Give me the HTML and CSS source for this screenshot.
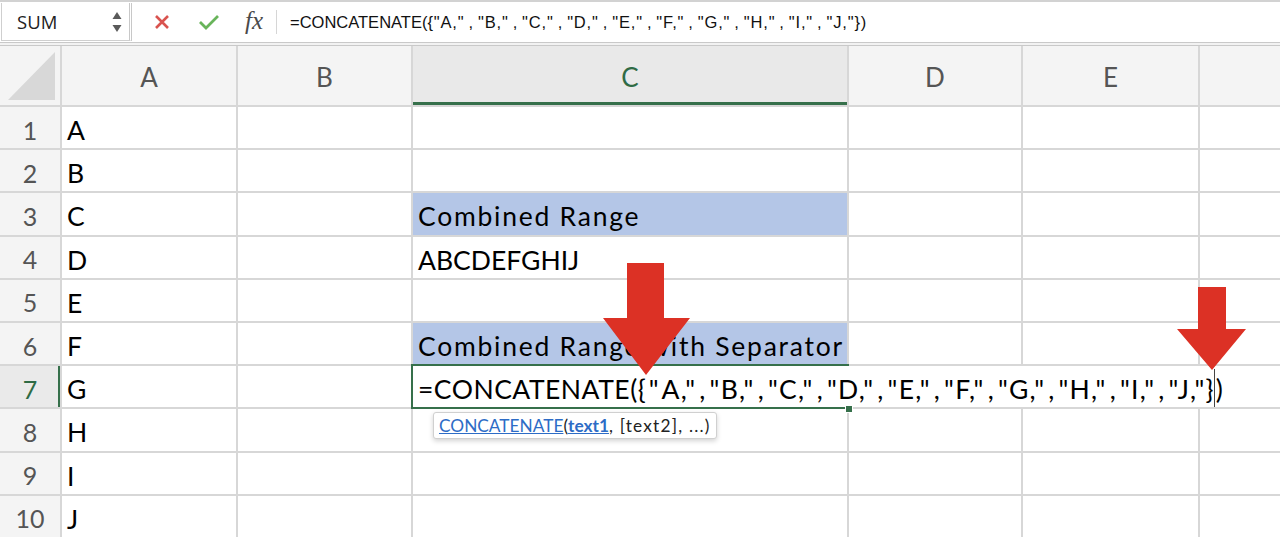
FILE: index.html
```html
<!DOCTYPE html>
<html>
<head>
<meta charset="utf-8">
<link rel="stylesheet" href="styles.css">
</head>
<body>
<div class="app">
  <div class="fbar">
    <div class="namebox">
      <span class="nb-text">SUM</span>
      <svg class="spin" width="10" height="22" viewBox="0 0 10 22"><polygon points="5,1 9.5,8 0.5,8" fill="#5a5a5a"/><polygon points="0.5,14 9.5,14 5,21" fill="#5a5a5a"/></svg>
    </div>
    <div class="fbtns">
      <svg class="ico" width="18" height="18" viewBox="0 0 18 18"><path d="M3 3 L15 15 M15 3 L3 15" stroke="#d9534f" stroke-width="2.6" stroke-linecap="butt"/></svg>
      <svg class="ico" width="22" height="18" viewBox="0 0 22 18"><path d="M2 9 L8 15 L20 3" stroke="#68b45a" stroke-width="2.8" fill="none"/></svg>
      <span class="fx">fx</span>
    </div>
    <div class="fsep"></div>
    <div class="ftext">=CONCATENATE(<span class="arr">{"A,"<span class="s">,</span>"B,"<span class="s">,</span>"C,"<span class="s">,</span>"D,"<span class="s">,</span>"E,"<span class="s">,</span>"F,"<span class="s">,</span>"G,"<span class="s">,</span>"H,"<span class="s">,</span>"I,"<span class="s">,</span>"J,"}</span>)</div>
  </div>
  <div class="band"></div>
  <div class="sheet">
    <div class="hd corner"><svg width="60" height="59" viewBox="0 0 60 59"><polygon points="8,54 55,54 55,6" fill="#d8d8d8"/></svg></div>
    <div class="hd col">A</div>
    <div class="hd col">B</div>
    <div class="hd col sel-col">C</div>
    <div class="hd col">D</div>
    <div class="hd col">E</div>
    <div class="hd col"></div>

    <div class="hd row">1</div><div class="c">A</div><div class="c"></div><div class="c"></div><div class="c"></div><div class="c"></div><div class="c"></div>
    <div class="hd row">2</div><div class="c">B</div><div class="c"></div><div class="c"></div><div class="c"></div><div class="c"></div><div class="c"></div>
    <div class="hd row">3</div><div class="c">C</div><div class="c"></div><div class="c blue">Combined Range</div><div class="c"></div><div class="c"></div><div class="c"></div>
    <div class="hd row">4</div><div class="c">D</div><div class="c"></div><div class="c">ABCDEFGHIJ</div><div class="c"></div><div class="c"></div><div class="c"></div>
    <div class="hd row">5</div><div class="c">E</div><div class="c"></div><div class="c"></div><div class="c"></div><div class="c"></div><div class="c"></div>
    <div class="hd row">6</div><div class="c">F</div><div class="c"></div><div class="c blue">Combined Range with Separator</div><div class="c"></div><div class="c"></div><div class="c"></div>
    <div class="hd row sel-row">7</div><div class="c">G</div><div class="c"></div>
    <div class="c active">
      <span class="edit">=CONCATENATE(<span class="arr"><span class="o">{"</span>A,"<span class="s">,</span>"B,"<span class="s">,</span>"C,"<span class="s">,</span>"D,"<span class="s">,</span>"E,"<span class="s">,</span>"F,"<span class="s">,</span>"G,"<span class="s">,</span>"H,"<span class="s">,</span>"I,"<span class="s">,</span>"J,"}</span><span class="caret"></span>)</span>
      <span class="handle"></span>
      <div class="tip"><span class="lnk">CONCATENATE</span>(<span class="lnk b">text1</span><span class="rest">, [text2], ...)</span></div>
    </div>
    <div class="c"></div><div class="c"></div><div class="c"></div>
    <div class="hd row">8</div><div class="c">H</div><div class="c"></div><div class="c"></div><div class="c"></div><div class="c"></div><div class="c"></div>
    <div class="hd row">9</div><div class="c">I</div><div class="c"></div><div class="c"></div><div class="c"></div><div class="c"></div><div class="c"></div>
    <div class="hd row">10</div><div class="c">J</div><div class="c"></div><div class="c"></div><div class="c"></div><div class="c"></div><div class="c"></div>
  </div>
  <svg class="arrows" width="1280" height="540" viewBox="0 0 1280 540">
    <polygon points="627,263 664,263 664,318 690,318 646,375 603,318 627,318" fill="#dc3125"/>
    <polygon points="1198,287 1226,287 1226,329 1246,329 1212,370 1177,329 1198,329" fill="#dc3125"/>
  </svg>
</div>
</body>
</html>
```

FILE: styles.css
```css
html, body {
  margin: 0;
  padding: 0;
  background: #ffffff;
  overflow: hidden;
}
.app {
  position: relative;
  width: 1280px;
  height: 540px;
  overflow: hidden;
  font-family: Lato, "Open Sans", sans-serif;
}
.fbar {
  height: 40px;
  border-top: 2px solid #d2d2d2;
  display: flex;
  align-items: center;
  background: #ffffff;
}
.namebox {
  box-sizing: border-box;
  width: 131px;
  height: 38px;
  margin-left: 1px;
  border: 1px solid #cfcfcf;
  border-right: 3px double #c8c8c8;
  border-top: none;
  display: flex;
  align-items: center;
  justify-content: space-between;
  padding: 0 7px 0 15px;
  background: #fff;
}
.nb-text {
  font-family: "Open Sans", "Liberation Sans", sans-serif;
  font-size: 18.5px;
  color: #222;
}
.spin { display: block; }
.fbtns {
  display: flex;
  align-items: center;
  margin-left: 21px;
}
.fbtns .ico:nth-child(1) { margin-right: 27px; }
.fbtns .ico:nth-child(2) { margin-right: 25px; }
.fx {
  font-family: "Liberation Serif", serif;
  font-style: italic;
  font-size: 25px;
  color: #4a4a4a;
  line-height: 1;
  margin-top: -4px;
}
.fsep {
  width: 1px;
  height: 24px;
  background: #d6d6d6;
  margin-left: 13px;
}
.ftext {
  margin-left: 13px;
  font-family: "Liberation Sans", Arial, sans-serif;
  font-size: 16.5px;
  color: #111;
  white-space: nowrap;
}
.ftext .arr { letter-spacing: 0.85px; }
.ftext .s { padding: 0 4px; }
.band {
  height: 2px;
  border-top: 1px solid #c9c9c9;
  border-bottom: 1px solid #c9c9c9;
  background: #f2f2f2;
}
.sheet {
  display: grid;
  grid-template-columns: 60px 174px 173px 434px 172px 175px 1fr;
  grid-template-rows: 59px repeat(10, 41.2px);
  gap: 2px;
  background: #d7d7d7;
}
.hd {
  background: #f4f4f4;
  color: #555;
  display: flex;
  align-items: center;
  justify-content: center;
}
.corner { justify-content: flex-start; align-items: flex-start; }
.corner svg { display: block; }
.col {
  font-size: 26px;
  padding-top: 2px;
}
.sel-col {
  background: #e9e9e9;
  color: #2f6b45;
  box-shadow: inset 0 -3px 0 #36704b;
}
.row {
  font-size: 25px;
  padding-top: 4px;
}
.sel-row {
  background: #eaeaea;
  color: #2f6b45;
  box-shadow: inset -2px 0 0 #36704b;
}
.c {
  background: #ffffff;
  color: #000;
  font-size: 26.5px;
  display: flex;
  align-items: center;
  padding: 5px 0 0 5px;
  white-space: nowrap;
  min-width: 0;
}
.blue {
  background: #b4c6e7;
  letter-spacing: 1.75px;
}
.active {
  position: relative;
  z-index: 2;
  overflow: visible;
}
.active::before {
  content: "";
  position: absolute;
  left: -2px;
  top: -2px;
  right: -2px;
  bottom: -2px;
  border: 2px solid #36704b;
  border-right: none;
}
.edit {
  position: relative;
  z-index: 1;
  align-self: stretch;
  display: flex;
  align-items: center;
  padding: 5px 14px 0 5px;
  margin: -5px 0 0 -5px;
  background: #ffffff;
  letter-spacing: 0.5px;
}
.edit .arr { letter-spacing: 1.25px; }
.edit .o { letter-spacing: 3px; }
.edit .s { padding: 0 3px; }
.caret {
  display: inline-block;
  width: 1px;
  height: 38px;
  background: #444;
  margin: 0 1px 0 -1px;
  align-self: flex-end;
}
.handle {
  position: absolute;
  right: -6px;
  bottom: -6px;
  width: 6px;
  height: 6px;
  background: #36704b;
  border: 1px solid #fff;
  z-index: 2;
}
.tip {
  position: absolute;
  left: 20px;
  top: 46px;
  width: 284px;
  height: 27px;
  box-sizing: border-box;
  padding: 0 0 0 5px;
  display: flex;
  align-items: center;
  background: #fff;
  border: 1px solid #d0d0d0;
  border-radius: 3px;
  box-shadow: 0 2px 5px rgba(0,0,0,0.18);
  font-size: 17.3px;
  color: #222;
  letter-spacing: 0;
  z-index: 3;
}
.tip .rest { letter-spacing: 1.2px; white-space: pre; }
.lnk {
  color: #2d6cc6;
  text-decoration: underline;
}
.lnk.b { font-weight: 700; }
.arrows {
  position: absolute;
  left: 0;
  top: 0;
  pointer-events: none;
  z-index: 5;
}
```
